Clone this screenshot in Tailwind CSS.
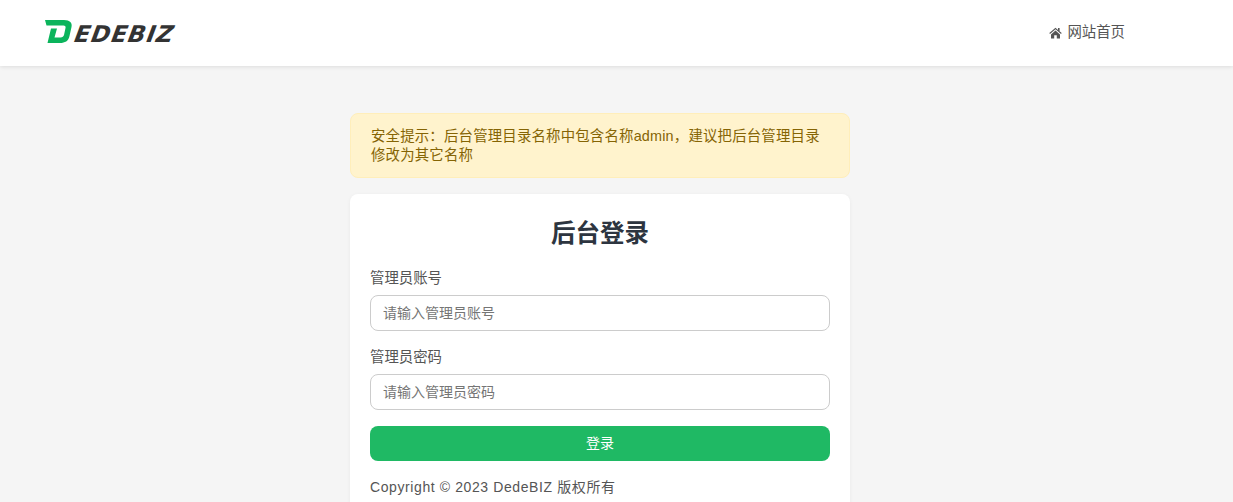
<!DOCTYPE html>
<html lang="zh-CN">
<head>
    <meta charset="UTF-8">
    <meta name="viewport" content="width=device-width, initial-scale=1.0">
    <title>后台登录</title>
    <script src="https://cdn.jsdelivr.net/npm/@tailwindcss/browser@4"></script>
</head>
<body class="bg-[#f5f5f5] h-[502px] overflow-hidden font-['Liberation_Sans','Noto_Sans_CJK_SC',sans-serif] text-[#333]">

    <header class="bg-white h-[66px] shadow-[0_1px_4px_rgba(0,0,0,0.1)]">
        <div class="w-[1200px] h-full pl-[45px] pr-[75px] flex items-center justify-between">
            <div class="flex items-end h-[24px] mb-[2px]">
                <svg width="28" height="24" viewBox="0 0 28 24" class="mr-[2px]">
                    <path fill="#0bb45c" d="M0 0H19C25 0 27.5 3 26.5 7L24.5 16C23.5 21 20 23 15 23H2.5L6 8.5H12L9.5 17.5H15.5C17.5 17.5 18.5 16.5 19 15L20.5 8C21 6.5 20 5.5 18.5 5.5H1.5Z"/>
                </svg>
                <span class="inline-block -skew-x-10 font-['DejaVu_Sans',sans-serif] italic font-bold text-[23px] leading-[20px] text-[#333] tracking-[1px]">EDEBIZ</span>
            </div>
            <a href="#" class="flex items-center gap-[5px] text-[14.4px] text-[#555]">
                <svg width="13" height="12" viewBox="0 0 13 12">
                    <path fill="#555" d="M6.5 0.8L0.3 6.1 1 6.9 6.5 2.3 12 6.9 12.7 6.1 10.6 4.3V1H9V2.9ZM2 7.4V11.5H5.2V8.2H7.8V11.5H11V7.4L6.5 3.6Z"/>
                </svg>
                网站首页
            </a>
        </div>
    </header>

    <div class="w-[1200px] flex justify-center pt-[47px]">
        <main class="w-[500px]">
            <div class="bg-[#fff3cd] border border-[#ffeeba] rounded-lg px-5 py-[12.5px] text-[14.4px] tracking-[0.2px] leading-[19px] text-[#856404] mb-4">
                安全提示：后台管理目录名称中包含名称admin，建议把后台管理目录修改为其它名称
            </div>

            <form class="bg-white rounded-lg p-5 shadow-[0_1px_4px_rgba(0,0,0,0.05)]">
                <h2 class="text-[24.5px] font-bold text-center text-[#2d3540] leading-[40px] mb-[14px]">后台登录</h2>

                <label for="userid" class="block text-[14.4px] text-[#555] leading-5 mb-[7px]">管理员账号</label>
                <input id="userid" type="text" placeholder="请输入管理员账号"
                    class="block w-full h-9 px-3 border border-[#ccc] rounded-lg text-sm placeholder:text-[#757575] mb-4">

                <label for="pwd" class="block text-[14.4px] text-[#555] leading-5 mb-[7px]">管理员密码</label>
                <input id="pwd" type="password" placeholder="请输入管理员密码"
                    class="block w-full h-9 px-3 border border-[#ccc] rounded-lg text-sm placeholder:text-[#757575] mb-4">

                <button type="button" class="block w-full h-[35px] pb-[2px] bg-[#1fb964] text-white text-sm rounded-lg">登录</button>

                <p class="text-sm text-[#555] tracking-[0.6px] mt-4">Copyright © 2023 DedeBIZ 版权所有</p>
            </form>
        </main>
    </div>

</body>
</html>
